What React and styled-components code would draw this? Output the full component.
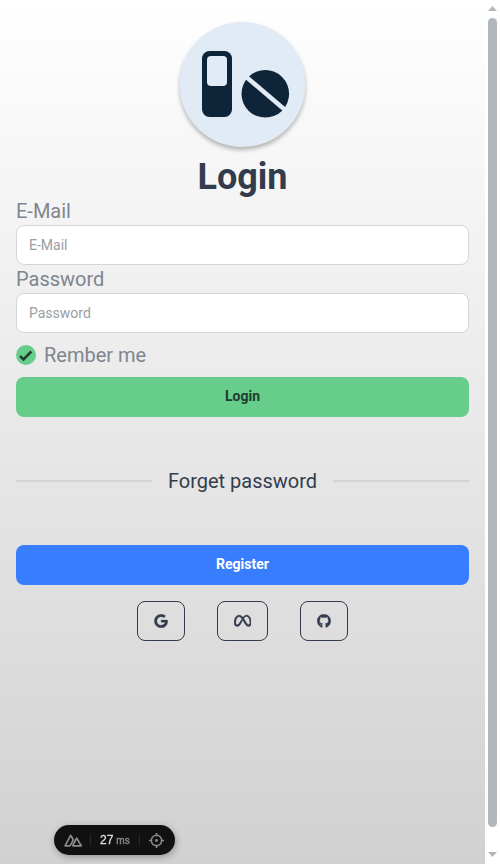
import React from "react";
import styled, { createGlobalStyle } from "styled-components";
import { FaGoogle, FaMeta, FaGithub } from "react-icons/fa6";

const GlobalStyle = createGlobalStyle`
  *, *::before, *::after { box-sizing: border-box; }
  body { margin: 0; background: #fff; overflow: hidden; font-family: Roboto, sans-serif; }
`;

const Window = styled.div`
  display: flex;
  width: 500px;
  height: 864px;
`;

const Page = styled.main`
  display: flex;
  flex-direction: column;
  width: 485px;
  padding: 21px 16px 0;
  color: #333c4d;
  background: linear-gradient(#ffffff, #d1d1d1);
`;

const Logo = styled.svg`
  display: block;
  align-self: center;
  width: 127px;
  height: 128px;
  overflow: visible;
  filter: drop-shadow(0 3px 2px rgba(0, 0, 0, 0.27));
`;

const Title = styled.h1`
  margin: 8px 0 4px;
  font-size: 36px;
  font-weight: 700;
  line-height: 40px;
  text-align: center;
`;

const Form = styled.form`
  display: flex;
  flex-direction: column;
`;

const FieldLabel = styled.label`
  height: 24px;
  color: #7f858f;
  font-size: 20px;
  line-height: 20px;
`;

const Input = styled.input`
  height: 40px;
  margin: 0 0 4px;
  padding: 0 12px;
  border: 1px solid #d4d5d7;
  border-radius: 8px;
  outline: 0;
  background: #fff;
  color: #333c4d;
  font: 400 14px/20px Roboto, sans-serif;
  &::placeholder { color: #9a9da3; opacity: 1; }
`;

const Remember = styled.label`
  display: flex;
  align-items: center;
  gap: 8px;
  height: 28px;
  margin: 4px 0 8px;
  color: #7f858f;
  font-size: 20px;
  line-height: 28px;
`;

const Check = styled.svg`
  width: 20px;
  height: 20px;
`;

const Button = styled.button`
  height: 40px;
  padding: 0 0 2px;
  border: 0;
  border-radius: 8px;
  background: ${(p) => (p.$primary ? "#377dfd" : "#66cd8a")};
  color: ${(p) => (p.$primary ? "#fff" : "#233c31")};
  font: 700 14px/14px Roboto, sans-serif;
`;

const Divider = styled.div`
  display: flex;
  align-items: center;
  gap: 16px;
  height: 16px;
  margin: 56px 0;
  font-size: 20px;
  line-height: 28px;
  white-space: nowrap;
  &::before, &::after {
    content: "";
    flex: 1;
    height: 2px;
    background: #d3d4d4;
  }
`;

const Social = styled.div`
  display: flex;
  justify-content: center;
  gap: 32px;
  margin-top: 16px;
`;

const SocialButton = styled.button`
  display: flex;
  align-items: center;
  justify-content: center;
  width: ${(p) => p.$width}px;
  height: 40px;
  padding: 0;
  border: 1px solid #333c4d;
  border-radius: 8px;
  background: transparent;
  color: #333c4d;
  font-size: 14px;
  svg { stroke: #333c4d; stroke-width: 10px; }
`;

const Scrollbar = styled.div`
  display: flex;
  flex-direction: column;
  align-items: center;
  width: 15px;
  padding: 6px 0 7px;
  background: #fff;
`;

const Arrow = styled.svg`
  display: block;
  flex: none;
  width: 9px;
  height: 5px;
  fill: #b2b6be;
`;

const Thumb = styled.div`
  width: 9px;
  height: 809px;
  margin: 7px 0 25px;
  border-radius: 5px;
  background: #b2b6be;
`;

const DevTools = styled.div`
  position: fixed;
  left: 54px;
  top: 825px;
  display: flex;
  align-items: center;
  width: 121px;
  height: 30px;
  padding: 0 10px;
  border-radius: 15px;
  background: #111;
  box-shadow: 1px 2px 7px rgba(0, 0, 0, 0.3);
  color: #ddd;
`;

const Separator = styled.span`
  width: 1px;
  height: 10px;
  background: #2b2b2b;
`;

const Timing = styled.span`
  display: flex;
  align-items: baseline;
  gap: 3px;
  width: 30px;
  margin: 0 9px;
  font: 12px/15px "Liberation Sans", sans-serif;
  -webkit-text-stroke: 0.3px #ddd;
  small { color: #8a8a8a; font-size: 10px; -webkit-text-stroke: 0.4px #8a8a8a; }
`;

const ToolIcon = styled.svg`
  flex: none;
  width: ${(p) => p.$width}px;
  height: ${(p) => p.$height}px;
  margin: ${(p) => p.$margin};
  fill: none;
  stroke: #8b8b8b;
  stroke-width: ${(p) => p.$stroke};
  stroke-linejoin: round;
`;

export default function App() {
  return (
    <>
      <GlobalStyle />
      <Window>
        <Page>
          <Logo viewBox="0.6 0 127 128" aria-hidden="true">
            <ellipse cx="64.1" cy="63.5" rx="62.8" ry="62.5" fill="#e1ebf5" />
            <rect x="23.6" y="30" width="30" height="66" rx="7.5" fill="#0e2439" />
            <rect x="28.6" y="35" width="20" height="30" rx="4" fill="#e1ebf5" />
            <circle cx="86.9" cy="72.8" r="23.8" fill="#0e2439" />
            <path d="M65 53.5 112 93.5" stroke="#e1ebf5" strokeWidth="4.5" />
          </Logo>
          <Title>Login</Title>
          <Form onSubmit={(e) => e.preventDefault()}>
            <FieldLabel htmlFor="email">E-Mail</FieldLabel>
            <Input id="email" type="email" placeholder="E-Mail" />
            <FieldLabel htmlFor="password">Password</FieldLabel>
            <Input id="password" type="password" placeholder="Password" />
            <Remember>
              <Check viewBox="0 0 20 20" aria-hidden="true">
                <circle cx="10" cy="10" r="10" fill="#66cd8a" />
                <path d="m4 11 3.5 3.4L15.3 6.5" fill="none" stroke="#233c31" strokeWidth="2.5" />
              </Check>
              Rember me
            </Remember>
            <Button type="submit">Login</Button>
          </Form>
          <Divider>Forget password</Divider>
          <Button type="button" $primary>Register</Button>
          <Social>
            <SocialButton $width={48} aria-label="Google"><FaGoogle /></SocialButton>
            <SocialButton $width={51} aria-label="Meta"><FaMeta size="17.5" /></SocialButton>
            <SocialButton $width={48} aria-label="GitHub"><FaGithub /></SocialButton>
          </Social>
        </Page>
        <Scrollbar>
          <Arrow viewBox="0 0 9 5"><path d="M4.5 0 9 5H0z" /></Arrow>
          <Thumb />
          <Arrow viewBox="0 0 9 5"><path d="M4.5 5 9 0H0z" /></Arrow>
        </Scrollbar>
      </Window>
      <DevTools>
        <ToolIcon $width={18} $height={13} $stroke={1.7} $margin="0 8px 0 0" viewBox="0 0 18 13">
          <path d="M6.1 11.8H1.1L6.6 1.3l2.7 4.5-3.2 6M8.4 11.8h8.8l-4.5-7.6-4.2 7.6" />
        </ToolIcon>
        <Separator />
        <Timing>27 <small>ms</small></Timing>
        <Separator />
        <ToolIcon $width={15} $height={15} $stroke={1.5} $margin="0 0 0 9px" viewBox="0 0 15 15">
          <circle cx="7.5" cy="7.5" r="5.2" />
          <path d="M7.5 0v3.2M7.5 11.8V15M0 7.5h3.2M11.8 7.5H15" />
          <circle cx="7.5" cy="7.5" r="0.7" />
        </ToolIcon>
      </DevTools>
    </>
  );
}
